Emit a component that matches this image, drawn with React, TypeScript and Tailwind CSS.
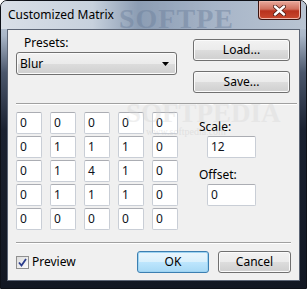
import React from "react";

const font = { fontFamily: '"Segoe UI", "Noto Sans", "Liberation Sans", sans-serif' };

const matrix = [
  [0, 0, 0, 0, 0],
  [0, 1, 1, 1, 0],
  [0, 1, 4, 1, 0],
  [0, 1, 1, 1, 0],
  [0, 0, 0, 0, 0],
];

function Field({ value, className = "" }: { value: string | number; className?: string }) {
  return (
    <div
      className={`h-[22px] flex items-center pl-[3px] bg-white border border-[#c9ced6] border-t-[#abadb3] rounded-[2px] text-[12px] text-[#10131c] ${className}`}
    >
      {value}
    </div>
  );
}

function Button({ label, primary = false, className = "" }: { label: string; primary?: boolean; className?: string }) {
  return (
    <div
      className={`h-[22px] flex items-center justify-center rounded-[3px] border text-[12px] text-black ${
        primary
          ? "border-[#3c7fb1] bg-[linear-gradient(#eaf6fd_0%,#d9f0fc_50%,#bee6fd_50%,#a7d9f5_100%)] shadow-[inset_0_0_0_1px_#9ed4f2]"
          : "border-[#707070] bg-[linear-gradient(#f2f2f2_0%,#ebebeb_50%,#dddddd_50%,#cfcfcf_100%)] shadow-[inset_0_0_0_1px_#fbfbfb]"
      } ${className}`}
    >
      {label}
    </div>
  );
}

export default function App() {
  return (
    <div
      className="relative w-[307px] h-[289px] overflow-hidden rounded-t-[7px] border border-[#0d1017] bg-[linear-gradient(#cdd6e1_0%,#aab7c8_12%,#4a566b_25%,#1a2130_45%,#121722_100%)]"
      style={font}
    >
      {/* title bar */}
      <div className="relative h-[28px] flex items-start justify-between bg-[linear-gradient(90deg,#d9dfe7_0%,#c7d1dd_30%,#8c9db4_45%,#a7b5c8_70%,#b9c4d2_100%)]">
        <span className="pl-[7px] pt-[5px] text-[12px] text-black">Customized Matrix</span>
        <span className="absolute left-[118px] top-[-3px] text-[28px] font-bold tracking-[1px] text-[#6c7f9b] opacity-45" style={{ fontFamily: '"Liberation Serif", serif' }}>
          SOFTPE
        </span>
        <div className="relative mr-[5px] w-[43px] h-[19px] flex items-center justify-center rounded-b-[4px] border border-t-0 border-[#3b1410] bg-[linear-gradient(#e9a99c_0%,#d0705e_45%,#b8321d_55%,#c9492f_100%)] shadow-[inset_0_0_0_1px_#f0b5a8]">
          <svg width="13" height="11" viewBox="0 0 13 11">
            <path d="M2 1.5 L11 9.5 M11 1.5 L2 9.5" stroke="#4a1a14" strokeWidth="4" strokeLinecap="round" />
            <path d="M2 1.5 L11 9.5 M11 1.5 L2 9.5" stroke="#ffffff" strokeWidth="2.4" strokeLinecap="round" />
          </svg>
        </div>
      </div>

      {/* client area */}
      <div className="relative ml-[6px] w-[293px] h-[252px] bg-[#f0f0f0] border border-[#5c6575] text-[12px] text-black">
        <div className="flex">
          <div className="ml-[8px] w-[161px] flex flex-col">
            <span className="pl-[8px] mt-[5px] h-[16px] leading-[16px]">Presets:</span>
            <div className="mt-[1px] h-[23px] flex items-center justify-between px-[3px] rounded-[3px] border border-[#707070] bg-[linear-gradient(#f2f2f2_0%,#ebebeb_50%,#dddddd_50%,#cfcfcf_100%)] shadow-[inset_0_0_0_1px_#fbfbfb]">
              <span>Blur</span>
              <svg width="7" height="4" viewBox="0 0 7 4" className="mr-[4px]">
                <path d="M0 0 H7 L3.5 4 Z" fill="#000" />
              </svg>
            </div>
          </div>
          <div className="ml-[16px] mt-[9px] flex flex-col gap-[10px]">
            <Button label="Load..." className="w-[97px]" />
            <Button label="Save..." className="w-[97px]" />
          </div>
        </div>

        <div className="ml-[8px] mr-[2px] mt-[10px] h-[2px] border-t border-[#a0a0a0] border-b-white border-b" />

        <div className="flex mt-[7px]">
          <div className="ml-[8px] flex flex-col gap-[2px]">
            {matrix.map((row, r) => (
              <div key={r} className="flex gap-[8px]">
                {row.map((v, c) => (
                  <Field key={c} value={v} className="w-[26px]" />
                ))}
              </div>
            ))}
          </div>
          <div className="ml-[21px] flex flex-col">
            <span className="mt-[7px] h-[16px] leading-[16px]">Scale:</span>
            <Field value={12} className="ml-[8px] mt-[1px] w-[49px]" />
            <span className="mt-[9px] h-[16px] leading-[16px]">Offset:</span>
            <Field value={0} className="ml-[8px] mt-[1px] w-[49px]" />
          </div>
        </div>

        <div className="ml-[8px] mr-[8px] mt-[12px] h-[2px] border-t border-[#a0a0a0] border-b-white border-b" />

        <div className="flex items-center mt-[7px] ml-[8px] mr-[8px]">
          <div className="w-[13px] h-[13px] flex items-center justify-center border border-[#8f8f8f] bg-[linear-gradient(135deg,#dcdcdc,#fbfbfb)]">
            <svg width="9" height="9" viewBox="0 0 9 9">
              <path d="M1 4.5 L3.5 7.5 L8 1" stroke="#2b3d8c" strokeWidth="1.8" fill="none" />
            </svg>
          </div>
          <span className="ml-[3px]">Preview</span>
          <Button label="OK" primary className="ml-auto w-[72px]" />
          <Button label="Cancel" className="ml-[9px] w-[73px]" />
        </div>

        {/* watermark */}
        <div className="absolute left-[118px] top-[68px] pointer-events-none flex flex-col items-start opacity-35">
          <span className="text-[27px] leading-[30px] font-bold text-[#d4d4d4]" style={{ fontFamily: '"Liberation Serif", serif' }}>
            SOFTPEDIA
          </span>
          <span className="-mt-[2px] ml-[20px] text-[10px] leading-[12px] text-[#c4c4c4]" style={{ fontFamily: '"Liberation Serif", serif' }}>
            www.softpedia.com
          </span>
        </div>
      </div>
    </div>
  );
}
